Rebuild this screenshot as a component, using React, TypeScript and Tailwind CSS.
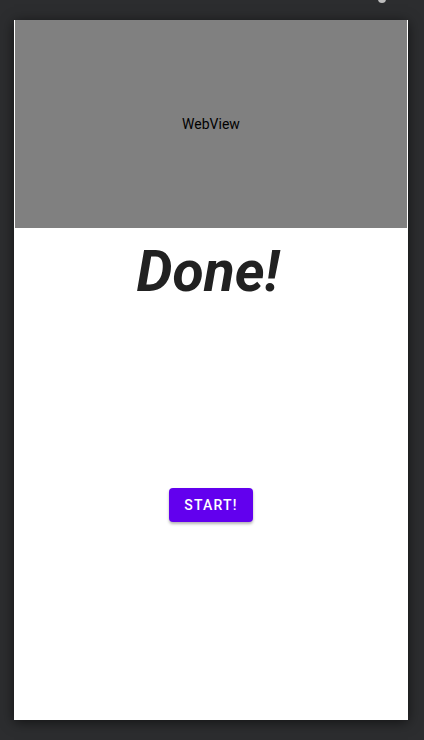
export default function App() {
  return (
    <div className="relative flex h-[740px] w-[424px] justify-start bg-[#2c2d2f] pl-[14px] pt-5 font-['Roboto',sans-serif]">
      <div className="absolute left-[378px] top-[-5px] h-2 w-2 rounded-full bg-[#bdbdbd]" />
      <div className="flex h-[700px] w-[394px] flex-col bg-white px-px shadow-[0_2px_12px_rgba(0,0,0,0.6)]">
        <div className="flex h-[208px] items-center justify-center bg-[#808080]">
          <span className="text-[14px] text-black">WebView</span>
        </div>
        <div className="flex justify-center pr-[6px] pt-[10px]">
          <span className="text-[57px] font-bold italic leading-[68px] text-[#212121]">Done!</span>
        </div>
        <div className="flex justify-center pt-[182px]">
          <button className="h-[34px] w-[84px] rounded-[4px] bg-[#6200ee] text-[14px] font-medium tracking-[1.2px] text-white shadow-[0_2px_3px_rgba(0,0,0,0.3)]">
            START!
          </button>
        </div>
      </div>
    </div>
  );
}
